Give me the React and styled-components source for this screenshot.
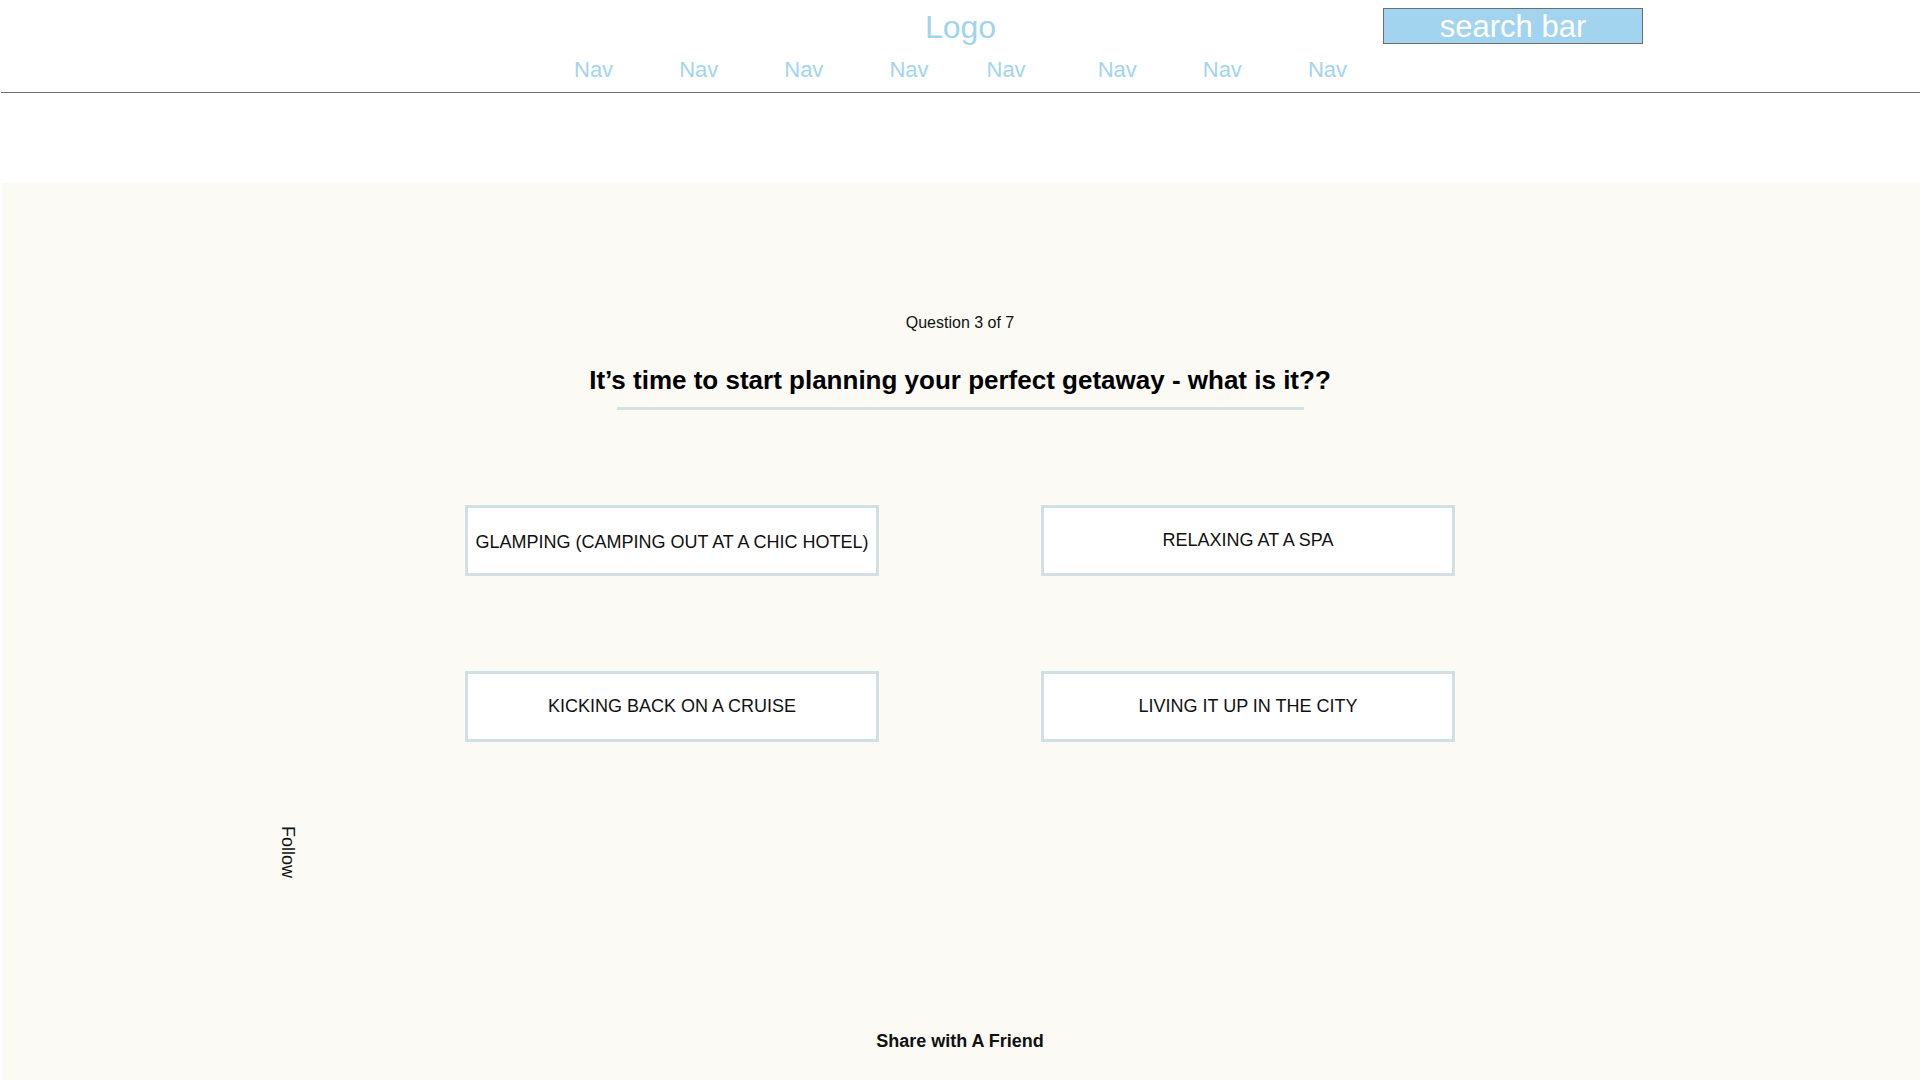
import React from 'react'
import styled, { createGlobalStyle } from 'styled-components'

const GlobalStyle = createGlobalStyle`
  body {
    margin: 0;
    background: #ffffff;
    font-family: "Liberation Sans", Arial, Helvetica, sans-serif;
  }
`

const Page = styled.div`
  width: 1920px;
  min-height: 1080px;
`

const Header = styled.header`
  padding-top: 7px;
  padding-bottom: 9px;
  border-bottom: 1px solid #6f6f6f;
  margin-left: 1px;
`

const TopRow = styled.div`
  display: grid;
  grid-template-columns: 1fr auto 1fr;
  align-items: center;
  height: 36px;
`

const Logo = styled.div`
  grid-column: 2;
  padding-top: 2px;
  font-size: 32px;
  line-height: 36px;
  color: #9fd4f0;
`

const SearchBar = styled.div`
  grid-column: 3;
  justify-self: end;
  margin-right: 277px;
  width: 258px;
  height: 34px;
  box-sizing: content-box;
  background: #a2d4f0;
  border: 1px solid #6d6d6d;
  color: #ffffff;
  font-size: 31px;
  line-height: 36px;
  text-align: center;
  overflow: hidden;
`

const NavList = styled.nav`
  display: flex;
  justify-content: center;
  gap: 66px;
  margin-top: 14px;
  height: 26px;
`

const NavItem = styled.a`
  font-size: 22px;
  line-height: 26px;
  color: #a2d4f0;
  text-decoration: none;
  margin-left: ${p => p.$shift || 0}px;
`

const Quiz = styled.main`
  position: relative;
  margin-top: 90px;
  margin-left: 2px;
  min-height: 897px;
  background: #fbfaf5;
  padding: 131px 2px 0 0;
  box-sizing: border-box;
  display: flex;
  flex-direction: column;
  align-items: center;
`

const Counter = styled.div`
  font-size: 16px;
  line-height: 18px;
  color: #111111;
`

const Question = styled.h1`
  margin: 33px 0 0;
  font-size: 26px;
  line-height: 30px;
  font-weight: 700;
  color: #000000;
`

const Divider = styled.div`
  width: 687px;
  height: 3px;
  margin-top: 12px;
  background: #d5e2e4;
`

const Answers = styled.div`
  display: grid;
  grid-template-columns: 414px 414px;
  grid-auto-rows: 71px;
  column-gap: 162px;
  row-gap: 95px;
  margin-top: 95px;
`

const Answer = styled.button`
  box-sizing: border-box;
  background: #ffffff;
  border: 3px solid #d3e0e3;
  font-family: "Liberation Sans", Arial, Helvetica, sans-serif;
  font-size: 18px;
  color: #111111;
  padding: ${p => p.$drop || 0}px 0 0;
  cursor: pointer;
  white-space: nowrap;
`

const Share = styled.div`
  margin-top: 289px;
  font-size: 18px;
  line-height: 21px;
  font-weight: 700;
  color: #111111;
`

const Follow = styled.div`
  position: absolute;
  left: 277px;
  top: 643px;
  writing-mode: vertical-rl;
  font-size: 18px;
  line-height: 18px;
  color: #111111;
`

const navShifts = [0, 0, 0, 0, -8, 6, 0, 0]

const answers = [
  { text: 'GLAMPING (CAMPING OUT AT A CHIC HOTEL)', drop: 4 },
  { text: 'RELAXING AT A SPA', drop: 0 },
  { text: 'KICKING BACK ON A CRUISE', drop: 0 },
  { text: 'LIVING IT UP IN THE CITY', drop: 0 },
]

const App = () => {
  return (
    <Page>
      <GlobalStyle />
      <Header>
        <TopRow>
          <Logo>Logo</Logo>
          <SearchBar>search bar</SearchBar>
        </TopRow>
        <NavList>
          {navShifts.map((s, i) => (
            <NavItem key={i} href="#" $shift={s}>Nav</NavItem>
          ))}
        </NavList>
      </Header>
      <Quiz>
        <Follow>Follow</Follow>
        <Counter>Question 3 of 7</Counter>
        <Question>It’s time to start planning your perfect getaway - what is it??</Question>
        <Divider />
        <Answers>
          {answers.map(a => (
            <Answer key={a.text} $drop={a.drop}>{a.text}</Answer>
          ))}
        </Answers>
        <Share>Share with A Friend</Share>
      </Quiz>
    </Page>
  )
}

export default App
